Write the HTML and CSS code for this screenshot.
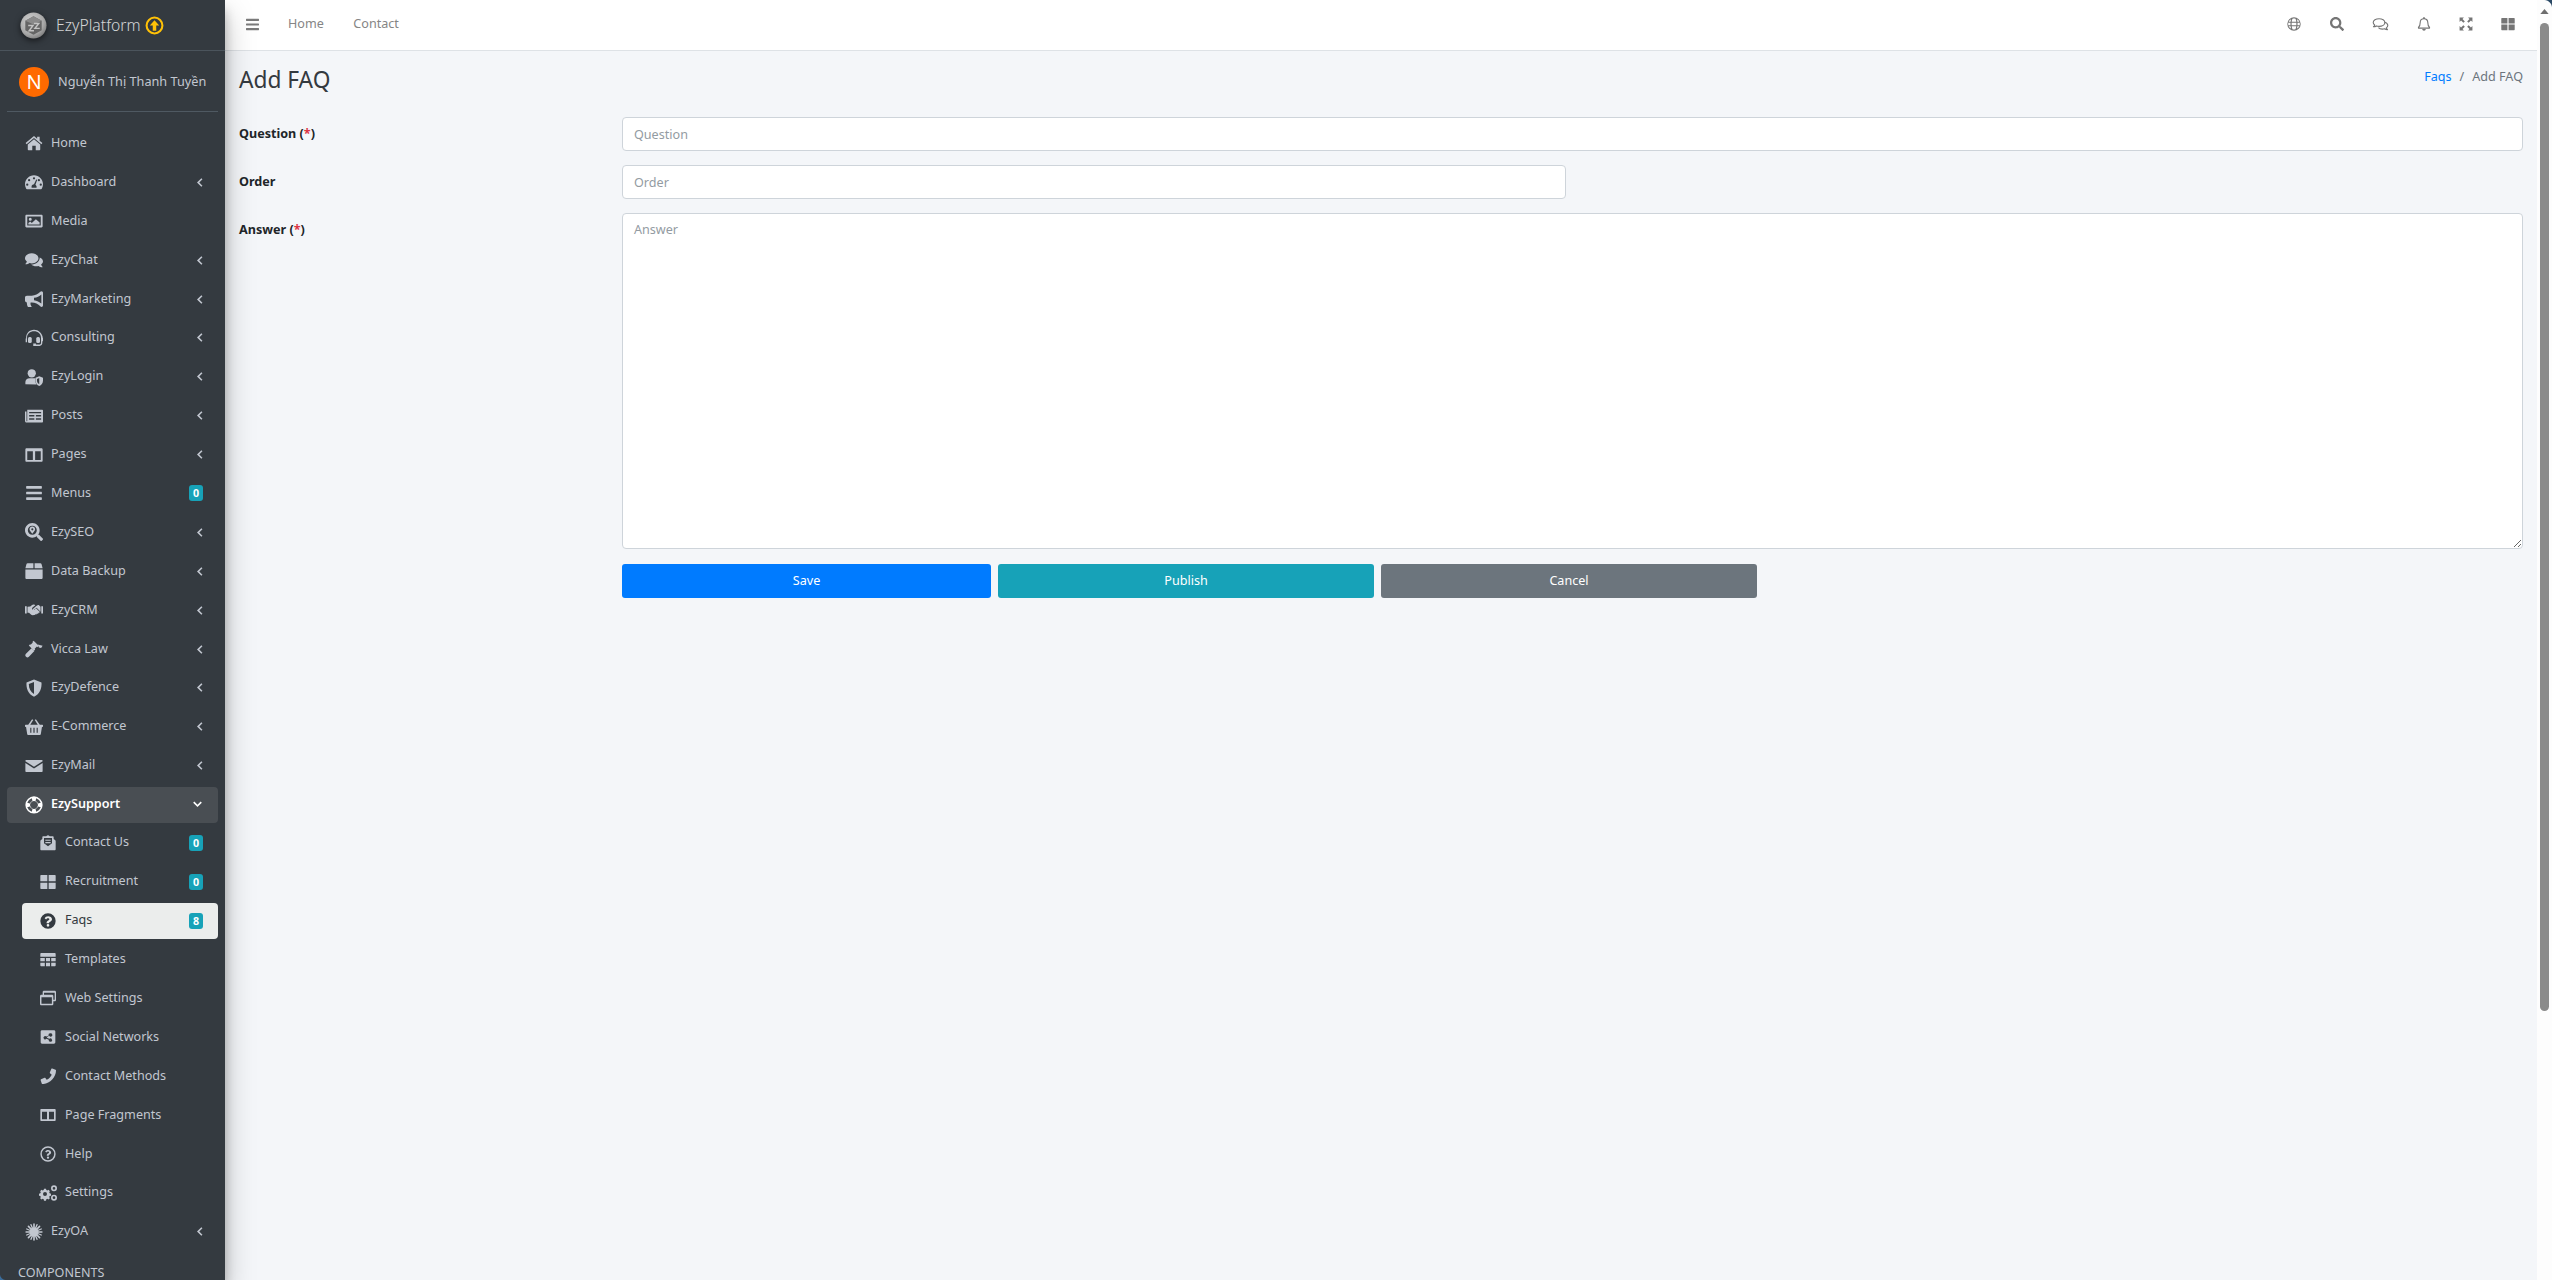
FILE: index.html
```html
<!DOCTYPE html>
<html lang="en">
<head>
<meta charset="utf-8">
<title>Add FAQ</title>
<link rel="stylesheet" href="styles.css">
</head>
<body>
<svg class="sprite" aria-hidden="true">
  <defs>
    <radialGradient id="logoGrad" cx="40%" cy="35%" r="70%"><stop offset="0" stop-color="#d2d2d2"/><stop offset="0.7" stop-color="#a8a8a8"/><stop offset="1" stop-color="#7c7c7c"/></radialGradient>
    <symbol id="i-home" viewBox="0 0 24 24"><path d="M12 2.500.8 12l1.300 1.600L12 5.300l9.900 8.300 1.300-1.600L19.500 9V3.500h-3.300v2.700z"/><path d="M12 7 3.700 14v6.500c0 .6.400 1 1 1h5v-6h4.600v6h5c.6 0 1-.4 1-1V14z"/></symbol>
    <symbol id="i-dash" viewBox="0 0 24 24"><path fill-rule="evenodd" d="M12 3C5.400 3 0 8.400 0 15c0 2.200.6 4.200 1.600 6 .2.400.6.500 1 .500h18.800c.4 0 .8-.1 1-.5 1-1.800 1.600-3.800 1.600-6 0-6.600-5.400-12-12-12zM12 5.500a1.500 1.500 0 1 1 0 3 1.500 1.500 0 0 1 0-3zM5.500 8a1.500 1.500 0 1 1 0 3 1.500 1.500 0 0 1 0-3zM3 14a1.500 1.500 0 1 1 0 3 1.500 1.500 0 0 1 0-3zM18.500 8a1.500 1.500 0 1 1 0 3 1.500 1.500 0 0 1 0-3zM21 14a1.500 1.500 0 1 1 0 3 1.500 1.500 0 0 1 0-3zM15 8.500l1.300.5-2.400 6.600c.9.600 1.600 1.700 1.600 2.900 0 .5-.1.900-.3 1.300H9c-.2-.4-.3-.8-.3-1.300 0-1.900 1.500-3.500 3.300-3.500z"/></symbol>
    <symbol id="i-image" viewBox="0 0 24 24"><path fill-rule="evenodd" d="M2 3.500h20c.8 0 1.500.7 1.500 1.500v14c0 .8-.7 1.500-1.500 1.500H2c-.8 0-1.500-.7-1.500-1.500V5c0-.8.700-1.500 1.500-1.500zM3 6v12h18V6zM7 7.500a2 2 0 1 1 0 4 2 2 0 0 1 0-4zM4.500 16.500v-2l2.500-2 2 2 5.500-5 5 4.500v2.500z"/></symbol>
    <symbol id="i-comments" viewBox="0 0 24 24"><path d="M9 3c5 0 9 3 9 6.800s-4 6.700-9 6.700c-1 0-2-.1-2.900-.4C4.800 17 3 17.800 1 17.800c-.5 0-.6-.5-.3-.8.800-.8 1.500-1.800 1.800-2.900C1 12.900 0 11.400 0 9.800 0 6 4 3 9 3z"/><path d="M19.700 8.600c2.500 1 4.300 2.900 4.300 5.200 0 1.600-1 3.100-2.500 4.200.3 1.100 1 2.100 1.800 2.900.3.300.2.800-.3.800-2 0-3.800-.8-5.100-1.700-.9.300-1.900.4-2.900.4-2.800 0-5.200-1-6.700-2.400 5.700-.1 11.200-3.400 11.400-9.400z"/></symbol>
    <symbol id="i-bullhorn" viewBox="0 0 24 24"><path d="M22 1.500c-.7 0-1.300.4-1.600.9C17.500 5.500 13.500 7.500 9 7.500H2.500C1 7.500 0 8.500 0 10v4c0 1.500 1 2.500 2.500 2.500l.1.200-.1 1.300c0 1.700.5 3.200 1.400 4.500h5.300c-1.100-1.200-1.900-2.700-1.900-4.500l.2-1.500h1.500c4.500 0 8.500 2 11.400 5.100.3.500.9.900 1.600.9 1.300 0 2-1.100 2-2V3.500c0-.9-.7-2-2-2zm-.2 16.600c-2.600-2.300-5.900-4-9.800-4.500V10.400c3.900-.5 7.200-2.200 9.800-4.500z"/></symbol>
    <symbol id="i-headset" viewBox="0 0 24 24"><path d="M12 1C5.900 1 1.500 5.800 1.500 11.500v1.300H.9v4.700h1.800v-6c0-5 4.100-8.500 9.300-8.500s9.300 3.500 9.300 8.500v7.300c0 .9-.7 1.700-1.700 1.700h-5v-1.300h-3.600v3.300h8.600c2 0 3.500-1.700 3.500-3.700v-2.500h.9v-4.700h-.5v-1.300C22.500 5.800 18.100 1 12 1z"/><rect x="4" y="10.500" width="5" height="8" rx="2"/><rect x="15" y="10.500" width="5" height="8" rx="2"/></symbol>
    <symbol id="i-usershield" viewBox="0 0 24 24"><circle cx="9" cy="7" r="5.500"/><path d="M.5 21.500v-2.700C.5 15.500 3 13.500 6 13.500h6c.7 0 1.300.1 1.900.3v3.200c0 2 .6 3.600 1.700 5z"/><path fill-rule="evenodd" d="M19 11l5 2v4c0 3.200-2.200 5.800-5 7-2.800-1.200-5-3.800-5-7v-4zm0 2.300-3 1.200V17c0 2 1.200 3.700 3 4.600z"/></symbol>
    <symbol id="i-news" viewBox="0 0 24 24"><path fill-rule="evenodd" d="M3.500 3.500H23c.6 0 1 .4 1 1v15c0 .6-.4 1-1 1H2c-1.100 0-2-.9-2-2V6h2v12.500c0 .3.200.5.500.5s.5-.2.500-.5V4c0-.3.200-.5.500-.5zM5.500 6.500v1.800h16V6.500zM5.500 10.500v2h7v-2zM14.500 10.500v2h7v-2zM5.500 15v2h7v-2zM14.500 15v2h7v-2z"/></symbol>
    <symbol id="i-columns" viewBox="0 0 24 24"><path fill-rule="evenodd" d="M2 3h20c.8 0 1.500.7 1.500 1.500v15c0 .8-.7 1.500-1.500 1.500H2c-.8 0-1.500-.7-1.500-1.500v-15C.5 3.700 1.200 3 2 3zm1 4v11.500h7.500V7zm10.500 0v11.500H21V7z"/></symbol>
    <symbol id="i-bars" viewBox="0 0 448 512"><path d="M16 132h416c8.837 0 16-7.163 16-16V76c0-8.837-7.163-16-16-16H16C7.163 60 0 67.163 0 76v40c0 8.837 7.163 16 16 16zm0 160h416c8.837 0 16-7.163 16-16v-40c0-8.837-7.163-16-16-16H16c-8.837 0-16 7.163-16 16v40c0 8.837 7.163 16 16 16zm0 160h416c8.837 0 16-7.163 16-16v-40c0-8.837-7.163-16-16-16H16c-8.837 0-16 7.163-16 16v40c0 8.837 7.163 16 16 16z"/></symbol>
    <symbol id="i-search" viewBox="0 0 512 512"><path d="M505 442.700L405.300 343c-4.500-4.500-10.600-7-17-7H372c27.600-35.300 44-79.700 44-128C416 93.100 322.900 0 208 0S0 93.100 0 208s93.100 208 208 208c48.300 0 92.700-16.400 128-44v16.300c0 6.400 2.500 12.500 7 17l99.700 99.700c9.400 9.400 24.600 9.400 33.900 0l28.300-28.300c9.400-9.400 9.400-24.600.1-34zM208 336c-70.700 0-128-57.200-128-128 0-70.700 57.200-128 128-128 70.700 0 128 57.200 128 128 0 70.700-57.200 128-128 128z"/></symbol>
    <symbol id="i-seo" viewBox="0 0 512 512"><path fill-rule="evenodd" d="M505 442.700L405.300 343c-4.500-4.500-10.600-7-17-7H372c27.600-35.300 44-79.700 44-128C416 93.100 322.900 0 208 0S0 93.100 0 208s93.100 208 208 208c48.300 0 92.700-16.400 128-44v16.300c0 6.400 2.500 12.500 7 17l99.700 99.700c9.400 9.400 24.600 9.400 33.900 0l28.300-28.300c9.400-9.400 9.400-24.600.1-34zM208 336c-70.700 0-128-57.200-128-128 0-70.700 57.200-128 128-128 70.700 0 128 57.200 128 128 0 70.700-57.200 128-128 128z"/><path d="M208 100c-45 0-80 35-80 80 0 40 55 95 80 125 25-30 80-85 80-125 0-45-35-80-80-80zm0 110a30 30 0 1 1 0-60 30 30 0 0 1 0 60z"/></symbol>
    <symbol id="i-box" viewBox="0 0 24 24"><path d="M3.500 1.500h7.700v6.800H.5L2 2.800c.2-.8.800-1.300 1.500-1.300zM12.800 1.500h7.700c.7 0 1.300.5 1.500 1.300l1.500 5.500H12.800zM.5 10h23v11c0 1-.7 1.700-1.600 1.700H2.100C1.200 22.700.5 22 .5 21z"/></symbol>
    <symbol id="i-hands" viewBox="0 0 24 24"><path d="M0 7h2.300v9.500H0zM21.700 7H24v9.500h-2.300z"/><path d="M3.300 7.500 7 7.200l2-1.700c.9-.7 2.700-.9 3.800-.5l1 .5-3.700 3.300c-.8.800-.8 2 0 2.700.7.700 1.900.7 2.600 0l2-1.800 4.800 4.700.8.700-1.700.3-1 1.200c-.4.500-1.100.6-1.600.2l-.6.800c-.4.500-1.100.5-1.500.2l-.6.600c-.5.500-1.200.5-1.700.1-1 .8-2.400.5-3.300-.2l-3-2.600H3.300z"/><path d="M20.700 7.500v6.800L15.500 9l-3.700 3.100c-.4.300-1 .3-1.300 0-.3-.4-.3-1 0-1.300L15 6.700c.8-.8 2.400-1.900 3.400-1.400z"/></symbol>
    <symbol id="i-gavel" viewBox="0 0 24 24"><path d="M11.500 1 9.800 2.700l.7.700-3 3-.7-.7-1.700 1.700 6.800 6.800 1.700-1.700-.7-.7 3-3 .7.700 1.700-1.700-6.800-6.800z"/><path d="M8.700 11 1.300 18.400a2.700 2.700 0 0 0 3.900 3.800l7.300-7.400z"/><path d="m17 6 6.500 1.500-2 3-3-.5z"/></symbol>
    <symbol id="i-shield" viewBox="0 0 24 24"><path fill-rule="evenodd" d="M12 .5 2 4.500c-.5 7.500 2 15.500 10 19 8-3.500 10.500-11.500 10-19zm0 3.600v16c-4.300-2.400-7-7-6.900-13.300z"/></symbol>
    <symbol id="i-basket" viewBox="0 0 24 24"><path fill-rule="evenodd" d="M9.500 1.500 4.300 9H.8C.3 9 0 9.300 0 9.800v1.300c0 .4.300.8.800.8h.6l1.500 9.300c.1.700.7 1.300 1.500 1.300h15.200c.8 0 1.400-.6 1.500-1.300l1.500-9.300h.6c.5 0 .8-.4.800-.8V9.800c0-.5-.3-.8-.8-.8h-3.500L14.500 1.500 13 2.500 17 9H7l4-6.500zM7 13h1.500v6.500H7zM11.200 13h1.600v6.500h-1.600zM15.500 13H17v6.500h-1.500z"/></symbol>
    <symbol id="i-mail" viewBox="0 0 24 24"><path d="M1.500 4h21c.6 0 1 .4 1 1v.6L12 13 .5 5.600V5c0-.6.400-1 1-1zM.5 8l11.500 7.200L23.500 8v11c0 .6-.4 1-1 1h-21c-.6 0-1-.4-1-1z"/></symbol>
    <symbol id="i-ring" viewBox="0 0 24 24"><path fill-rule="evenodd" transform="rotate(45 12 12)" d="M12 .5a11.500 11.500 0 1 1 0 23 11.500 11.500 0 0 1 0-23zm0 6.500a5 5 0 1 0 0 10 5 5 0 0 0 0-10zM7.700 3.500l1.900 3.200a6 6 0 0 1 4.800 0l1.900-3.200a10 10 0 0 0-8.600 0zM3.500 7.700a10 10 0 0 0 0 8.600l3.200-1.900a6 6 0 0 1 0-4.800zM20.500 7.700l-3.200 1.900a6 6 0 0 1 0 4.800l3.200 1.900a10 10 0 0 0 0-8.600zM9.600 17.300l-1.900 3.200a10 10 0 0 0 8.600 0l-1.900-3.200a6 6 0 0 1-4.800 0z"/></symbol>
    <symbol id="i-mailopen" viewBox="0 0 24 24"><path fill-rule="evenodd" d="M12 .5c.7 0 1.500.5 2.700 1.500H19c.8 0 1.500.7 1.500 1.500V6l2 1.600c.6.400 1 1 1 1.700v12.200c0 1-.8 1.500-1.500 1.500H2c-.7 0-1.500-.5-1.500-1.500V9.300c0-.7.400-1.300 1-1.700L3.500 6V3.500C3.500 2.700 4.200 2 5 2h4.300C10.500 1 11.300.5 12 .5zM6 4.500v8l6 4.300 6-4.300v-8zM8 7h8v1.700H8zM8 10.500h8v1.700H8z"/></symbol>
    <symbol id="i-grid" viewBox="0 0 24 24"><path d="M.5 2.500c0-.6.400-1 1-1h9.500v9.500H.5zM13 1.500h9.500c.6 0 1 .4 1 1v8.500H13zM.5 13H11v9.500H1.500c-.6 0-1-.4-1-1zM13 13h10.500v8.500c0 .6-.4 1-1 1H13z"/></symbol>
    <symbol id="i-question" viewBox="0 0 24 24"><path fill-rule="evenodd" d="M12 .5a11.500 11.500 0 1 1 0 23 11.500 11.500 0 0 1 0-23zM12.300 5C9.600 5 8 6.300 7 8l2.200 1.600c.7-.9 1.500-1.700 2.800-1.700 1 0 2 .6 2 1.500 0 .9-.7 1.300-1.800 1.900-1.300.8-2.300 1.800-2.300 3.500v.7h3.700v-.5c0-1 .8-1.400 1.800-2 1.300-.8 2.600-1.800 2.600-3.700C18 6.700 15 5 12.300 5zM12 16.500a2 2 0 1 0 0 4 2 2 0 0 0 0-4z"/></symbol>
    <symbol id="i-table" viewBox="0 0 24 24"><path d="M.5 3c0-.8.700-1.500 1.500-1.500h20c.8 0 1.500.7 1.500 1.500v4H.5zM.5 9h6.700v5H.5zM9 9h6v5H9zM16.800 9h6.700v5h-6.700zM.5 16h6.700v5.500H2c-.8 0-1.500-.7-1.500-1.500zM9 16h6v5.500H9zM16.800 16h6.700v4c0 .8-.7 1.500-1.500 1.500h-5.200z"/></symbol>
    <symbol id="i-window" viewBox="0 0 24 24"><path fill-rule="evenodd" d="M6 1h16c1.100 0 2 .9 2 2v12c0 1.100-.9 2-2 2h-2v4c0 1.100-.9 2-2 2H2c-1.100 0-2-.9-2-2V9c0-1.100.9-2 2-2h2V3c0-1.100.9-2 2-2zm0 3.200V7h12c1.100 0 2 .9 2 2v5.800h2V4.200zM2.200 11v9.800h15.600V11z"/></symbol>
    <symbol id="i-share" viewBox="0 0 24 24"><path fill-rule="evenodd" d="M3 2h18c1.100 0 2 .9 2 2v16c0 1.100-.9 2-2 2H3c-1.100 0-2-.9-2-2V4c0-1.100.9-2 2-2zm12.500 4.500a2.500 2.500 0 0 0-2.400 3.200L9.700 11.400a2.500 2.500 0 1 0 0 3.200l3.400 1.700a2.500 2.500 0 1 0 .8-1.500l-3.400-1.700a2.500 2.500 0 0 0 0-1.200l3.400-1.700a2.500 2.500 0 1 0 1.600-3.700z"/></symbol>
    <symbol id="i-phone" viewBox="0 0 24 24"><path d="M23.300 2.500 18.400.9c-.6-.2-1.200.1-1.500.6l-2.200 5.200c-.2.500-.1 1 .3 1.300L17.600 10c-1.500 3.300-4.300 6.100-7.600 7.600l-1.900-2.600c-.3-.4-.9-.5-1.300-.3l-5.200 2.200c-.5.300-.8.900-.6 1.500l1.600 4.900c.1.500.6.800 1.100.8C14 24 24 14 24 3.600c0-.5-.3-1-.7-1.100z"/></symbol>
    <symbol id="i-qring" viewBox="0 0 24 24"><path fill-rule="evenodd" d="M12 .5a11.500 11.500 0 1 1 0 23 11.500 11.500 0 0 1 0-23zm0 2.200a9.300 9.300 0 1 0 0 18.600 9.300 9.300 0 0 0 0-18.600zM12.200 6C10 6 8.700 7 7.800 8.500l1.800 1.300c.6-.8 1.200-1.400 2.400-1.400.9 0 1.600.5 1.600 1.300 0 .8-.6 1.100-1.500 1.600-1.100.6-1.900 1.400-1.900 2.900v.5h2.900v-.3c0-.8.600-1.200 1.400-1.600 1.100-.6 2.200-1.500 2.200-3.100C16.700 7.400 14.400 6 12.200 6zM12 15.800a1.700 1.700 0 1 0 0 3.400 1.700 1.700 0 0 0 0-3.400z"/></symbol>
    <symbol id="i-cogs" viewBox="0 0 30 24"><path fill-rule="evenodd" d="M9 5.500h3l.5 2 1.500.7 1.800-1 2 2-1 1.800.7 1.500 2 .5v3l-2 .5-.7 1.500 1 1.800-2 2-1.800-1-1.500.7-.5 2H9l-.5-2-1.500-.7-1.800 1-2-2 1-1.800-.7-1.500-2-.5v-3l2-.5.7-1.500-1-1.800 2-2 1.800 1 1.500-.7zm1.500 5a3 3 0 1 0 0 6 3 3 0 0 0 0-6z"/><path fill-rule="evenodd" d="M24 .5a4.500 4.500 0 1 1 0 9 4.500 4.500 0 0 1 0-9zm0 2.500a2 2 0 1 0 0 4 2 2 0 0 0 0-4zM24 14.500a4.500 4.500 0 1 1 0 9 4.500 4.500 0 0 1 0-9zm0 2.500a2 2 0 1 0 0 4 2 2 0 0 0 0-4z"/></symbol>
    <symbol id="i-snow" viewBox="0 0 24 24"><g stroke="currentColor" stroke-width="2.200" stroke-linecap="round"><path d="M12 1.500v21M1.500 12h21M4.600 4.600l14.800 14.800M19.400 4.600 4.600 19.400"/><path stroke-width="1.800" d="M8 2.300l8 19.400M16 2.300 8 21.700M2.300 8l19.400 8M2.300 16l19.400-8"/></g><circle cx="12" cy="12" r="6"/></symbol>
    <symbol id="i-left" viewBox="0 0 12 16"><path d="M9.500 1.500 3 8l6.500 6.500 1.700-1.700L6.400 8l4.800-4.800z"/></symbol>
    <symbol id="i-down" viewBox="0 0 16 12"><path d="M1.500 2.500 8 9l6.500-6.500L12.800.8 8 5.600 3.200.8z"/></symbol>
    <symbol id="i-globe" viewBox="0 0 24 24"><path fill-rule="evenodd" d="M12 .5a11.500 11.500 0 1 1 0 23 11.500 11.500 0 0 1 0-23zM9.500 3c-.8 1.500-1.200 3-1.400 5h7.800c-.2-2-.6-3.500-1.400-5-1.600-.5-3.400-.5-5 0zM6.200 8c.1-1.500.4-2.800.9-4C5 5 3.500 6.300 2.800 8zM2.200 10c-.2 1.300-.2 2.700 0 4H6c-.1-1.300-.1-2.700 0-4zM8 10c-.1 1.300-.1 2.700 0 4h8c.1-1.300.1-2.700 0-4zM18 10c.1 1.300.1 2.700 0 4h3.800c.2-1.300.2-2.700 0-4zM17.800 8h3.400c-.7-1.700-2.200-3-4.300-4 .5 1.200.8 2.500.9 4zM2.800 16c.7 1.700 2.200 3 4.300 4-.5-1.200-.8-2.500-.9-4zM8.100 16c.2 2 .6 3.500 1.400 5 1.600.5 3.400.5 5 0 .8-1.500 1.200-3 1.400-5zM17.800 16c-.1 1.500-.4 2.800-.9 4 2.100-1 3.600-2.300 4.300-4z"/></symbol>
    <symbol id="i-commentso" viewBox="0 0 28 24"><g fill="none" stroke="currentColor" stroke-width="1.900" stroke-linejoin="round"><path d="M11.500 3C6 3 1.500 5.800 1.500 9.500c0 1.700 1 3.200 2.500 4.300-.3 1.200-1 2.200-2 3 2 0 3.700-.6 5-1.500 1.400.4 2.900.7 4.500.7 5.500 0 10-2.800 10-6.500S17 3 11.500 3z"/><path d="M21 9c3.200.8 5.500 3 5.500 5.500 0 1.600-.9 3-2.500 4.100.3 1.200 1 2.200 2 3-2 0-3.700-.6-5-1.500-1.400.4-2.700.6-4 .6-2.500 0-5-.8-6.500-2.500"/></g></symbol>
    <symbol id="i-bell" viewBox="0 0 24 24"><g fill="none" stroke="currentColor" stroke-width="1.900" stroke-linejoin="round"><path d="M12 3C8 3 5.500 6 5.500 9.500c0 5.500-1.500 7-3 8.500v1h19v-1c-1.500-1.500-3-3-3-8.500C18.500 6 16 3 12 3z"/></g><path d="M10.500 1.500c0-.8.700-1.500 1.500-1.500s1.500.7 1.500 1.500V3.500h-3zM9 20.500h6c0 1.700-1.300 3-3 3s-3-1.300-3-3z"/></symbol>
    <symbol id="i-expand" viewBox="0 0 24 24"><path d="M1 1h7.500L6 3.500 10 7.500 7.500 10 3.500 6 1 8.500zM23 1v7.500L20.500 6l-4 4L14 7.500l4-4L15.500 1zM1 23v-7.500L3.500 18l4-4 2.500 2.500-4 4L8.500 23zM23 23h-7.500l2.500-2.500-4-4 2.500-2.500 4 4 2.500-2.500z"/></symbol>
    <symbol id="i-up" viewBox="0 0 24 24"><circle cx="12" cy="12" r="10" fill="none" stroke="currentColor" stroke-width="2.600"/><path d="M12 5.500 18 12h-3.800v6.500H9.800V12H6z"/></symbol>
  </defs>
</svg>

<div class="app">
  <aside class="sidebar">
    <div class="brand">
      <svg class="logo" viewBox="0 0 28 28"><circle cx="14" cy="14" r="13.500" fill="url(#logoGrad)"/><path d="M14 4.500l8.500 4.500v10L14 23.500 5.500 19V9z" fill="#656565"/><path d="M14 4.500l8.500 4.500L14 13 5.500 9z" fill="#8a8a8a"/><path d="M8.500 14h5l-4 5.500h5M14.500 12h5l-4 5h5" fill="none" stroke="#c4c4c4" stroke-width="1.500"/></svg>
      <span class="brand-text">EzyPlatform</span>
      <svg class="brand-up"><use href="#i-up"/></svg>
    </div>
    <div class="user">
      <span class="avatar">N</span>
      <span class="user-name">Nguyễn Thị Thanh Tuyền</span>
    </div>
    <nav class="menu">
      <a class="item"><svg class="ic"><use href="#i-home"/></svg><span class="label">Home</span></a>
      <a class="item"><svg class="ic"><use href="#i-dash"/></svg><span class="label">Dashboard</span><svg class="caret"><use href="#i-left"/></svg></a>
      <a class="item"><svg class="ic"><use href="#i-image"/></svg><span class="label">Media</span></a>
      <a class="item"><svg class="ic"><use href="#i-comments"/></svg><span class="label">EzyChat</span><svg class="caret"><use href="#i-left"/></svg></a>
      <a class="item"><svg class="ic"><use href="#i-bullhorn"/></svg><span class="label">EzyMarketing</span><svg class="caret"><use href="#i-left"/></svg></a>
      <a class="item"><svg class="ic"><use href="#i-headset"/></svg><span class="label">Consulting</span><svg class="caret"><use href="#i-left"/></svg></a>
      <a class="item"><svg class="ic"><use href="#i-usershield"/></svg><span class="label">EzyLogin</span><svg class="caret"><use href="#i-left"/></svg></a>
      <a class="item"><svg class="ic"><use href="#i-news"/></svg><span class="label">Posts</span><svg class="caret"><use href="#i-left"/></svg></a>
      <a class="item"><svg class="ic"><use href="#i-columns"/></svg><span class="label">Pages</span><svg class="caret"><use href="#i-left"/></svg></a>
      <a class="item"><svg class="ic"><use href="#i-bars"/></svg><span class="label">Menus</span><span class="badge">0</span></a>
      <a class="item"><svg class="ic"><use href="#i-seo"/></svg><span class="label">EzySEO</span><svg class="caret"><use href="#i-left"/></svg></a>
      <a class="item"><svg class="ic"><use href="#i-box"/></svg><span class="label">Data Backup</span><svg class="caret"><use href="#i-left"/></svg></a>
      <a class="item"><svg class="ic"><use href="#i-hands"/></svg><span class="label">EzyCRM</span><svg class="caret"><use href="#i-left"/></svg></a>
      <a class="item"><svg class="ic"><use href="#i-gavel"/></svg><span class="label">Vicca Law</span><svg class="caret"><use href="#i-left"/></svg></a>
      <a class="item"><svg class="ic"><use href="#i-shield"/></svg><span class="label">EzyDefence</span><svg class="caret"><use href="#i-left"/></svg></a>
      <a class="item"><svg class="ic"><use href="#i-basket"/></svg><span class="label">E-Commerce</span><svg class="caret"><use href="#i-left"/></svg></a>
      <a class="item"><svg class="ic"><use href="#i-mail"/></svg><span class="label">EzyMail</span><svg class="caret"><use href="#i-left"/></svg></a>
      <a class="item open"><svg class="ic"><use href="#i-ring"/></svg><span class="label">EzySupport</span><svg class="caret-down"><use href="#i-down"/></svg></a>
      <div class="submenu">
        <a class="item sub"><svg class="ic"><use href="#i-mailopen"/></svg><span class="label">Contact Us</span><span class="badge">0</span></a>
        <a class="item sub"><svg class="ic"><use href="#i-grid"/></svg><span class="label">Recruitment</span><span class="badge">0</span></a>
        <a class="item sub active"><svg class="ic"><use href="#i-question"/></svg><span class="label">Faqs</span><span class="badge">8</span></a>
        <a class="item sub"><svg class="ic"><use href="#i-table"/></svg><span class="label">Templates</span></a>
        <a class="item sub"><svg class="ic"><use href="#i-window"/></svg><span class="label">Web Settings</span></a>
        <a class="item sub"><svg class="ic"><use href="#i-share"/></svg><span class="label">Social Networks</span></a>
        <a class="item sub"><svg class="ic"><use href="#i-phone"/></svg><span class="label">Contact Methods</span></a>
        <a class="item sub"><svg class="ic"><use href="#i-columns"/></svg><span class="label">Page Fragments</span></a>
        <a class="item sub"><svg class="ic"><use href="#i-qring"/></svg><span class="label">Help</span></a>
        <a class="item sub"><svg class="ic ic-wide"><use href="#i-cogs"/></svg><span class="label">Settings</span></a>
      </div>
      <a class="item"><svg class="ic"><use href="#i-snow"/></svg><span class="label">EzyOA</span><svg class="caret"><use href="#i-left"/></svg></a>
      <div class="menu-header">COMPONENTS</div>
    </nav>
  </aside>

  <div class="main">
    <header class="topbar">
      <svg class="tb-bars"><use href="#i-bars"/></svg>
      <a class="tb-link">Home</a>
      <a class="tb-link">Contact</a>
      <div class="tb-icons">
        <svg class="tb-ic tb-ic-first"><use href="#i-globe"/></svg>
        <svg class="tb-ic"><use href="#i-search"/></svg>
        <svg class="tb-ic tb-ic-wide"><use href="#i-commentso"/></svg>
        <svg class="tb-ic"><use href="#i-bell"/></svg>
        <svg class="tb-ic"><use href="#i-expand"/></svg>
        <svg class="tb-ic"><use href="#i-grid"/></svg>
      </div>
    </header>
    <main class="content">
      <div class="page-head">
        <h1 class="title">Add FAQ</h1>
        <div class="crumbs"><a class="crumb-link">Faqs</a><span class="crumb-sep">/</span><span>Add FAQ</span></div>
      </div>
      <form class="form">
        <div class="row">
          <label class="field-label">Question <span class="req-wrap">(<span class="req">*</span>)</span></label>
          <input class="control" type="text" placeholder="Question">
        </div>
        <div class="row">
          <label class="field-label">Order</label>
          <input class="control control-half" type="text" placeholder="Order">
        </div>
        <div class="row">
          <label class="field-label">Answer <span class="req-wrap">(<span class="req">*</span>)</span></label>
          <textarea class="control control-area" placeholder="Answer"></textarea>
        </div>
        <div class="row">
          <span class="field-label"></span>
          <div class="actions">
            <button class="btn btn-save" type="button">Save</button>
            <button class="btn btn-publish" type="button">Publish</button>
            <button class="btn btn-cancel" type="button">Cancel</button>
          </div>
        </div>
      </form>
    </main>
  </div>

  <div class="scrollbar" aria-hidden="true">
    <svg class="sb-arrow" viewBox="0 0 10 6"><path d="M5 0l5 6H0z"/></svg>
    <div class="sb-thumb"></div>
  </div>
</div>
</body>
</html>
```
FILE: styles.css
```css
* { box-sizing: border-box; }
html, body { margin: 0; height: 100%; overflow: hidden; }
body { font-family: "Noto Sans", sans-serif; font-size: 12.6px; line-height: 1.5; color: #212529; background: #f4f6f9; }
.sprite { width: 0; height: 0; position: absolute; }
.app { display: flex; height: 1280px; position: relative; }
.app::before, .app::after { content: ""; position: absolute; width: 8px; height: 8px; z-index: 3; }
.app::before { top: 0; right: 0; background: radial-gradient(circle at 0 100%, transparent 7.5px, #2b4a66 8.5px); }
.app::after { bottom: 0; left: 0; width: 6px; height: 6px; background: radial-gradient(circle at 100% 0, transparent 5.5px, #3b6d9c 6.5px); }

.sidebar { flex: 0 0 225px; width: 225px; height: 1280px; overflow: hidden; background: #343a40; color: #c2c7d0; box-shadow: 0 14px 28px rgba(0,0,0,.25), 0 10px 10px rgba(0,0,0,.22); position: relative; z-index: 2; }
.brand { height: 51px; display: flex; align-items: center; padding: 1px 0 0 20px; border-bottom: 1px solid #4b545c; }
.logo { width: 27px; height: 27px; filter: drop-shadow(0 2px 3px rgba(0,0,0,.6)); }
.brand-text { margin-left: 9px; font-size: 15.75px; font-weight: 300; color: rgba(255,255,255,.8); }
.brand-up { width: 19px; height: 19px; margin-left: 4px; color: #ffc107; fill: #ffc107; }
.user { margin: 0 7px; height: 61px; display: flex; align-items: center; padding: 1px 0 0 12px; border-bottom: 1px solid #4f5962; }
.avatar { width: 30px; height: 30px; border-radius: 50%; background: #ff6a00; color: #fff; font-size: 20px; line-height: 30px; text-align: center; }
.user-name { margin-left: 9px; white-space: nowrap; font-size: 12.7px; }

.menu { padding: 13.5px 7px 0; }
.submenu { display: block; margin: -.6px 0 .8px; }
.item { display: flex; align-items: center; padding: 8.5px 15px 8.5px 18px; margin-bottom: 3px; border-radius: 4px; color: #c2c7d0; height: 35.9px; }
.ic { flex: 0 0 18px; width: 18px; height: 18px; fill: #c2c7d0; color: #c2c7d0; }
.label { margin-left: 8px; white-space: nowrap; flex: 1; }
.caret { width: 8px; height: 11px; fill: #c2c7d0; margin-right: 0; }
.caret-down { width: 11px; height: 8px; fill: #fff; }
.item.open { background: #494e53; color: #fff; font-weight: 600; }
.item.open .ic { fill: #fff; color: #fff; }
.item.sub { margin-left: 15px; padding-left: 18px; }
.item.sub .ic { flex-basis: 16px; width: 16px; height: 16px; }
.item.sub .ic-wide { flex-basis: 20px; width: 20px; margin-left: -2px; margin-right: -2px; }
.item.active { background: #ebedec; color: #343a40; }
.item.active .ic { fill: #343a40; color: #343a40; }
.item.sub .label { margin-left: 9px; }
.badge { width: 14px; height: 16px; border-radius: 3px; background: #17a2b8; color: #fff; font-size: 10.7px; font-weight: 700; line-height: 16px; text-align: center; }
.menu-header { padding: 15.5px 11px 0; line-height: 10px; white-space: nowrap; }

.main { flex: 1; min-width: 0; display: flex; flex-direction: column; }
.topbar { height: 51px; background: #fff; border-bottom: 1px solid #dee2e6; display: flex; align-items: center; padding: 0 22px 2px 21px; color: rgba(0,0,0,.5); }
.tb-bars { width: 13px; height: 15px; fill: #7b7b7b; margin-right: 29px; }
.tb-link { margin-right: 29.5px; color: #858585; }
.tb-icons { margin-left: auto; display: flex; align-items: center; gap: 28px; }
.tb-ic { width: 14px; height: 14px; fill: #757575; color: #757575; }
.tb-ic-first { margin-right: 1px; }
.tb-ic-wide { width: 17px; }

.content { flex: 1; padding: 0 14px; }
.page-head { display: flex; justify-content: space-between; align-items: flex-start; height: 66px; }
.title { margin: 11px 0 0; font-size: 22.7px; font-weight: 400; line-height: 36px; color: #343a40; }
.crumbs { margin-top: 17px; color: #6c757d; display: flex; }
.crumb-link { color: #007bff; }
.crumb-sep { padding: 0 8px; }

.form { display: flex; flex-direction: column; }
.row { display: grid; grid-template-columns: 383px 1fr; margin-bottom: 14px; align-items: start; }
.row:nth-child(3) { margin-bottom: 15px; }
.field-label { font-weight: 700; padding-top: 8px; }
.req-wrap { color: #212529; }
.req { color: #dc3545; }
.control { display: block; width: 100%; height: 34px; padding: 6px 11px; border: 1px solid #ced4da; border-radius: 4px; background: #fff; font: inherit; color: #495057; outline: none; }
.control::placeholder { color: #939ba2; opacity: 1; }
.control-half { width: 944px; }
.control-area { height: 336px; padding-top: 7px; resize: vertical; }
.actions { display: flex; gap: 7px; }
.btn { height: 34px; border: 0; border-radius: 3px; color: #fff; font: inherit; font-weight: 400; }
.btn-save { width: 369px; background: #007bff; }
.btn-publish { width: 376px; background: #17a2b8; }
.btn-cancel { width: 376px; background: #6c757d; }

.scrollbar { flex: 0 0 15px; width: 15px; height: 1280px; background: #fdfdfd; display: flex; flex-direction: column; align-items: center; position: relative; }
.sb-arrow { width: 9px; height: 5px; margin-top: 9px; fill: #6e6e6e; }
.sb-thumb { width: 9px; height: 988px; margin-top: 9px; background: #8b8b8b; border-radius: 5px; }
```
